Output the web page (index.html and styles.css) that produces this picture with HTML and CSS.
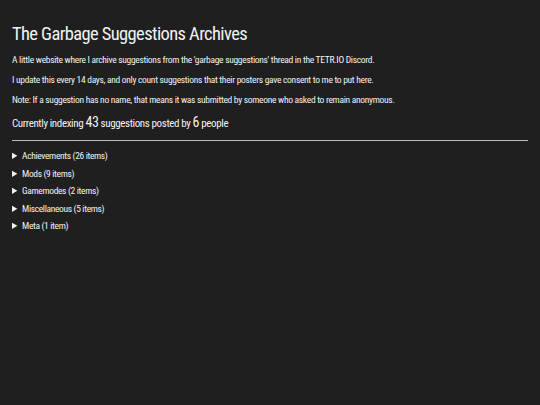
FILE: index.html
```html
<!DOCTYPE html>
<html>
<head>
<meta charset="utf-8">
<link rel="stylesheet" href="styles.css">
</head>
<body>
<h1 class="title">The Garbage Suggestions Archives</h1>
<p class="intro">A little website where I archive suggestions from the 'garbage suggestions' thread in the TETR.IO Discord.</p>
<p class="intro">I update this every 14 days, and only count suggestions that their posters gave consent to me to put here.</p>
<p class="intro">Note: If a suggestion has no name, that means it was submitted by someone who asked to remain anonymous.</p>
<p class="count">Currently indexing <span class="num">43</span> suggestions posted by <span class="num">6</span> people</p>
<hr class="rule">
<div class="sections">
<details class="sec"><summary>Achievements (26 items)</summary></details>
<details class="sec"><summary>Mods (9 items)</summary></details>
<details class="sec"><summary>Gamemodes (2 items)</summary></details>
<details class="sec"><summary>Miscellaneous (5 items)</summary></details>
<details class="sec"><summary>Meta (1 item)</summary></details>
</div>
</body>
</html>
```
FILE: styles.css
```css
html, body {
  background: #1f1f1f;
}
body {
  margin: 0;
  padding: 22px 12px 0 12px;
  color: #f2f2f2;
  font-family: Roboto, "Liberation Sans", sans-serif;
  font-stretch: 75%;
}
.title {
  font-weight: 400;
  font-size: 18.5px;
  line-height: 24px;
  margin: 0 0 8px 0;
  letter-spacing: -0.6px;
}
.intro {
  font-size: 9.5px;
  line-height: 12px;
  margin: 0 0 8px 0;
  letter-spacing: -0.3px;
}
.count {
  font-size: 11px;
  line-height: 16px;
  margin: 8px 0 8px 0;
  letter-spacing: -0.38px;
}
.num {
  font-size: 14px;
}
.rule {
  border: 0;
  border-top: 1px solid #bdbdbd;
  margin: 0 0 9px 0;
}
.sections {
  display: flex;
  flex-direction: column;
  gap: 5.6px;
}
.sec summary {
  font-size: 9.5px;
  line-height: 12px;
  letter-spacing: -0.35px;
  cursor: pointer;
}
```
